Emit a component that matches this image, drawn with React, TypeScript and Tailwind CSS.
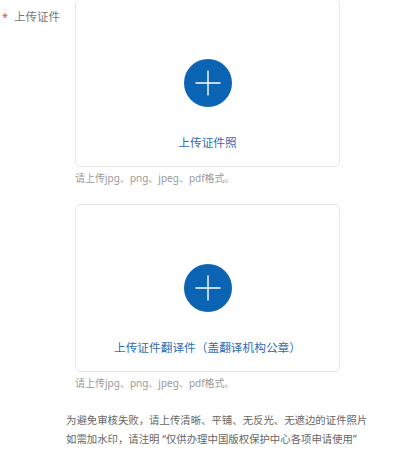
import React from "react";

const font = "font-['Noto_Sans','Noto_Sans_CJK_SC',sans-serif]";

function PlusCircle() {
  return (
    <div className="w-[48px] h-[48px] rounded-full bg-[#0b64b3] flex items-center justify-center">
      <svg width="26" height="26" viewBox="0 0 26 26">
        <path d="M13 0.5V25.5M0.5 13H25.5" stroke="#fff" strokeWidth="1.4" />
      </svg>
    </div>
  );
}

function UploadBox({ label }: { label: string }) {
  return (
    <div className="w-[265px] h-[168px] rounded-[5px] border border-[#e3e7eb] bg-white flex flex-col items-center">
      <div className="mt-[59px]">
        <PlusCircle />
      </div>
      <div className="mt-[27px] text-[11.7px] leading-[16px] text-[#2f6db3]">{label}</div>
    </div>
  );
}

function Hint() {
  return (
    <div className="mt-[3px] text-[10px] leading-[16px] text-[#9a9a9a]">
      请上传jpg、png、jpeg、pdf格式。
    </div>
  );
}

export default function App() {
  return (
    <div className={`w-[400px] h-[467px] bg-white overflow-hidden ${font}`}>
      <div className="flex -mt-px">
        <div className="w-[75px] shrink-0 pt-[10px] pl-[2px] flex items-start">
          <span className="text-[11px] leading-[16px] text-[#e8473c] mr-[6px]">*</span>
          <span className="text-[11.5px] leading-[16px] text-[#777]">上传证件</span>
        </div>
        <div className="flex flex-col">
          <UploadBox label="上传证件照" />
          <Hint />
          <div className="mt-[18px]">
            <UploadBox label="上传证件翻译件（盖翻译机构公章）" />
          </div>
          <Hint />
        </div>
      </div>
      <div className="pl-[66px] mt-[20px] text-[10.4px] leading-[19px] text-[#666]">
        <div>为避免审核失败，请上传清晰、平铺、无反光、无遮边的证件照片</div>
        <div>如需加水印，请注明 “仅供办理中国版权保护中心各项申请使用”</div>
      </div>
    </div>
  );
}
